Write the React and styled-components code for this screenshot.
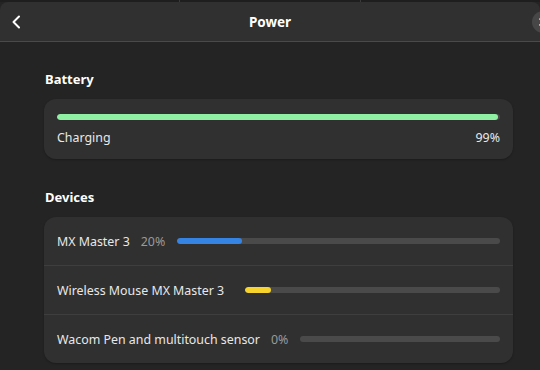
import React from 'react';
import styled, { createGlobalStyle } from 'styled-components';

const GlobalStyle = createGlobalStyle`
  html, body {
    margin: 0;
    padding: 0;
    background: #1c1c1c;
    overflow: hidden;
  }
  body {
    font-family: "Noto Sans", "Open Sans", sans-serif;
    color: #ffffff;
  }
`;

const devices = [
  { name: 'MX Master 3', level: 20, label: '20%', color: '#3584e4' },
  { name: 'Wireless Mouse MX Master 3', level: 10, label: null, color: '#f6d32d' },
  { name: 'Wacom Pen and multitouch sensor', level: 0, label: '0%', color: '#3584e4' },
];

export default function App() {
  return (
    <>
      <GlobalStyle />
      <Window>
        <TopStrip>
          <Tab />
          <Tab />
          <Tab $last />
        </TopStrip>
        <HeaderBar>
          <BackButton aria-label="Back">
            <svg width="16" height="16" viewBox="0 0 16 16" fill="none">
              <path d="M10 2.5 L4.5 8 L10 13.5" stroke="#ffffff" strokeWidth="2" strokeLinecap="round" strokeLinejoin="round" />
            </svg>
          </BackButton>
          <Title>Power</Title>
          <CloseButton aria-label="Close">
            <svg width="10" height="10" viewBox="0 0 10 10">
              <path d="M2 2 L8 8 M8 2 L2 8" stroke="#ffffff" strokeWidth="1.6" strokeLinecap="round" />
            </svg>
          </CloseButton>
        </HeaderBar>
        <Content>
          <Section>
            <SectionTitle>Battery</SectionTitle>
            <Card>
              <BatteryBody>
                <Track>
                  <Fill style={{ width: '99.5%' }} $color="#8ff0a4" />
                </Track>
                <BatteryInfo>
                  <span>Charging</span>
                  <span>99%</span>
                </BatteryInfo>
              </BatteryBody>
            </Card>
          </Section>
          <Section>
            <SectionTitle>Devices</SectionTitle>
            <Card>
              {devices.map((d) => (
                <DeviceRow key={d.name}>
                  <DeviceName>{d.name}</DeviceName>
                  {d.label && <Percent>{d.label}</Percent>}
                  <BarWrap $gap={d.label ? 12 : 21}>
                    <Track>
                      <Fill style={{ width: `${d.level}%` }} $color={d.color} />
                    </Track>
                  </BarWrap>
                </DeviceRow>
              ))}
            </Card>
          </Section>
        </Content>
      </Window>
    </>
  );
}

const Window = styled.div`
  width: 540px;
  height: 370px;
  background: #242424;
  display: flex;
  flex-direction: column;
  overflow: hidden;
`;

const TopStrip = styled.div`
  height: 2px;
  display: flex;
  background: #1e1e1e;
`;

const Tab = styled.div`
  flex: 1;
  border-right: ${(p) => (p.$last ? 'none' : '1px solid #3a3a3a')};
`;

const HeaderBar = styled.header`
  height: 39px;
  background: #303030;
  border-bottom: 1px solid #4a4a4a;
  border-radius: 8px 8px 0 0;
  display: flex;
  align-items: center;
  justify-content: space-between;
  padding: 0 0 0 8px;
  position: relative;
`;

const BackButton = styled.button`
  width: 18px;
  height: 24px;
  border: 0;
  background: transparent;
  display: flex;
  align-items: center;
  justify-content: center;
  padding: 0;
`;

const Title = styled.h1`
  position: absolute;
  left: 0;
  right: 0;
  text-align: center;
  margin: 0;
  font-size: 13.5px;
  font-weight: 700;
  pointer-events: none;
`;

const CloseButton = styled.button`
  width: 22px;
  height: 22px;
  border-radius: 50%;
  border: 0;
  background: #474747;
  margin-right: -14px;
  display: flex;
  align-items: center;
  justify-content: center;
  padding: 0;
`;

const Content = styled.main`
  padding: 28px 27px 0 44px;
  display: flex;
  flex-direction: column;
  gap: 29px;
`;

const Section = styled.section`
  display: flex;
  flex-direction: column;
  gap: 11px;
`;

const SectionTitle = styled.h2`
  margin: 0 0 0 1px;
  font-size: 13px;
  font-weight: 700;
  line-height: 18px;
`;

const Card = styled.div`
  background: #303030;
  border-radius: 12px;
  box-shadow: 0 1px 2px rgba(0, 0, 0, 0.25);
  overflow: hidden;
`;

const BatteryBody = styled.div`
  padding: 15px 13px 12px 13px;
  display: flex;
  flex-direction: column;
  gap: 9px;
`;

const BatteryInfo = styled.div`
  display: flex;
  justify-content: space-between;
  font-size: 12.4px;
  line-height: 18px;
  color: #e8e8e8;
`;

const Track = styled.div`
  height: 6px;
  border-radius: 3px;
  background: #4a4a4a;
  overflow: hidden;
`;

const Fill = styled.div`
  height: 100%;
  border-radius: 3px;
  background: ${(p) => p.$color};
`;

const DeviceRow = styled.div`
  height: 48px;
  display: flex;
  align-items: center;
  padding: 0 13px;
  font-size: 12.4px;
  color: #e8e8e8;
  & + & {
    border-top: 1px solid #3e3e3e;
  }
`;

const DeviceName = styled.span`
  white-space: nowrap;
`;

const Percent = styled.span`
  margin-left: 11px;
  color: #9a9a9a;
`;

const BarWrap = styled.div`
  flex: 1;
  margin-left: ${(p) => p.$gap}px;
`;
